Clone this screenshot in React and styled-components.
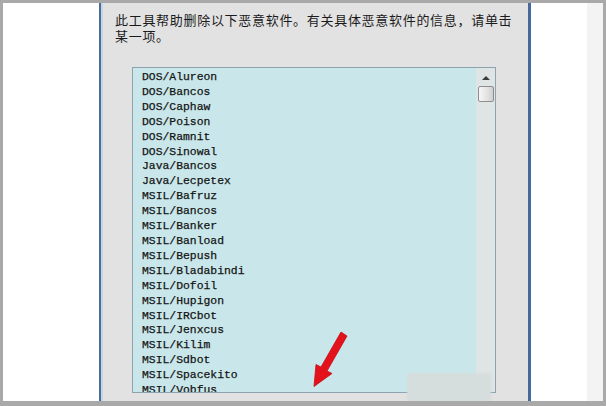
import React from "react";
import styled, { createGlobalStyle } from "styled-components";

const items = [
  "DOS/Alureon",
  "DOS/Bancos",
  "DOS/Caphaw",
  "DOS/Poison",
  "DOS/Ramnit",
  "DOS/Sinowal",
  "Java/Bancos",
  "Java/Lecpetex",
  "MSIL/Bafruz",
  "MSIL/Bancos",
  "MSIL/Banker",
  "MSIL/Banload",
  "MSIL/Bepush",
  "MSIL/Bladabindi",
  "MSIL/Dofoil",
  "MSIL/Hupigon",
  "MSIL/IRCbot",
  "MSIL/Jenxcus",
  "MSIL/Kilim",
  "MSIL/Sdbot",
  "MSIL/Spacekito",
  "MSIL/Vobfus",
];

function App() {
  return (
    <>
      <GlobalStyle />
      <Frame>
        <SidePane />
        <Dialog>
          <Intro>
            <IntroLine>此工具帮助删除以下恶意软件。有关具体恶意软件的信息，请单击</IntroLine>
            <IntroLine>某一项。</IntroLine>
          </Intro>
          <ListBox>
            <ItemList>
              {items.map((name) => (
                <Item key={name}>{name}</Item>
              ))}
            </ItemList>
            <ScrollBar>
              <ArrowUp />
              <Thumb />
            </ScrollBar>
            <Arrow viewBox="0 0 50 68" width="50" height="68">
              <polygon
                points="35,7 41,11 21,46 26,48.5 8,61.5 10,39.5 15,42"
                fill="#e3121b"
                stroke="#c40d14"
                strokeWidth="0.8"
                strokeLinejoin="round"
              />
            </Arrow>
          </ListBox>
          <Blur />
        </Dialog>
        <SidePane $narrow />
        <Strip />
      </Frame>
    </>
  );
}

export default App;

const GlobalStyle = createGlobalStyle`
  html, body {
    margin: 0;
    padding: 0;
    background: #ffffff;
  }
`;

const Frame = styled.div`
  width: 606px;
  height: 406px;
  box-sizing: border-box;
  border: 3px solid #a9a9a9;
  border-bottom-width: 5px;
  display: flex;
  overflow: hidden;
`;

const SidePane = styled.div`
  width: ${(p) => (p.$narrow ? "56px" : "96px")};
  flex-shrink: 0;
  background: #ffffff;
`;

const Strip = styled.div`
  flex: 1;
  background: #f3f3f3;
`;

const Dialog = styled.div`
  position: relative;
  width: 432px;
  flex-shrink: 0;
  box-sizing: border-box;
  background: #e2e2e2;
  border-left: 2px solid #4b6e98;
  border-right: 3px solid #44699a;
  box-shadow: inset 2px 0 0 #c5d6e4;
  padding: 9px 0 0 14px;
  display: flex;
  flex-direction: column;
`;

const Intro = styled.div`
  display: flex;
  flex-direction: column;
`;

const IntroLine = styled.span`
  display: block;
  height: 16px;
  font-family: "Noto Sans CJK SC", sans-serif;
  font-size: 13px;
  line-height: 16px;
  letter-spacing: 0.7px;
  color: #1a1a1a;
  white-space: nowrap;
`;

const ListBox = styled.div`
  position: relative;
  margin: 23px 0 0 17px;
  width: 364px;
  height: 326px;
  flex-shrink: 0;
  box-sizing: border-box;
  border: 1px solid #8fa2b0;
  background: #c9e7ea;
  display: flex;
  overflow: hidden;
`;

const ItemList = styled.ul`
  flex: 1;
  margin: 0;
  padding: 2px 0 0 9px;
  list-style: none;
  overflow: hidden;
`;

const Item = styled.li`
  font-family: "Liberation Mono", monospace;
  font-size: 11.4px;
  line-height: 14.9px;
  color: #141414;
  white-space: nowrap;
  -webkit-text-stroke: 0.25px #141414;
`;

const ScrollBar = styled.div`
  width: 19px;
  flex-shrink: 0;
  background: #dfe4e4;
  display: flex;
  flex-direction: column;
  align-items: center;
  padding-top: 8px;
  gap: 6px;
`;

const ArrowUp = styled.div`
  width: 0;
  height: 0;
  border-left: 4px solid transparent;
  border-right: 4px solid transparent;
  border-bottom: 4px solid #3c3c3c;
`;

const Thumb = styled.div`
  width: 16px;
  height: 16px;
  box-sizing: border-box;
  border: 1px solid #8e8e8e;
  border-radius: 2px;
  background: linear-gradient(to right, #f6f6f6, #e2e2e2 60%, #cfcfcf);
`;

const Arrow = styled.svg`
  position: absolute;
  left: 173px;
  top: 257px;
`;

const Blur = styled.div`
  position: absolute;
  left: 306px;
  top: 370px;
  width: 84px;
  height: 29px;
  background: #d5dedd;
  filter: blur(1px);
`;
